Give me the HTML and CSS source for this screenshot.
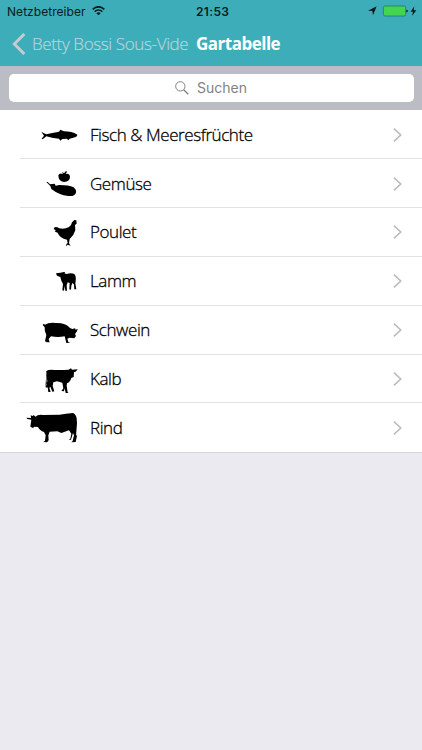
FILE: index.html
```html
<!DOCTYPE html>
<html lang="de">
<head>
<meta charset="utf-8">
<title>Gartabelle</title>
<link rel="stylesheet" href="styles.css">
</head>
<body>
<header class="top">
  <div class="status">
    <span class="carrier">Netzbetreiber</span>
    <svg class="wifi" viewBox="0 0 39 30"><g fill="none" stroke="#051c1f" stroke-width="5"><path d="M2 10Q19.500-5 37 10"/><path d="M8 17Q19.500 7 31 17"/></g><path d="M13 22Q19.500 16 26 22L19.500 28Z" fill="#051c1f"/></svg>
    <span class="clock">21:53</span>
    <svg class="power" viewBox="0 0 150 42"><path d="M0 20L26 7 15 34 13 21Z" fill="#051c1f"/><rect x="46" y="6" width="67" height="30" rx="5" fill="#43d551" stroke="#176b67" stroke-width="2"/><path d="M115 17q5 1 5 4t-5 4z" fill="#051c1f"/><path d="M139 7l-11 16h7l-3 13 13-17h-8z" fill="#051c1f"/></svg>
  </div>
  <nav class="nav">
    <svg class="back" viewBox="0 0 42 66"><path d="M37 3L7 33 37 63" fill="none" stroke="#c5cbd0" stroke-width="9"/></svg>
    <span class="parent">Betty Bossi Sous-Vide</span>
    <span class="title">Gartabelle</span>
  </nav>
</header>
<div class="search">
  <div class="field">
    <svg class="glass" viewBox="0 0 42 42"><g fill="none" stroke="#818286" stroke-width="3"><circle cx="16" cy="16" r="14"/><path d="M26 26L40 40" stroke-width="4"/></g></svg>
    <span>Suchen</span>
  </div>
</div>
<main class="list">
  <div class="row"><svg class="animal" viewBox="0 -5 210 146"><path d="M64 60L72 65 79 68Q96 63 117 60L121 54 132 59Q155 59 172 69 173 74 165 77L149 81 145 86 141 81 127 82 121 87 117 81Q94 80 79 74L68 83 65 81 72 72Z"/></svg><span class="label">Fisch &amp; Meeresfrüchte</span><svg class="chev" viewBox="0 0 24 39"><path d="M2 2L21 19.500 2 37"/></svg></div>
  <div class="row"><svg class="animal" viewBox="0 -3 210 146"><path d="M115 46Q119 37 129 42L126 35 132 40 138 33 141 35 137 42Q148 39 150 50 150 65 132 66 115 65 115 46ZM79 66L83 66 90 73 104 71 107 77 118 75Q146 75 161 82 169 88 168 98 164 110 145 108 117 105 94 87L91 78Z"/></svg><span class="label">Gemüse</span><svg class="chev" viewBox="0 0 24 39"><path d="M2 2L21 19.500 2 37"/></svg></div>
  <div class="row"><svg class="animal" viewBox="0 -3 210 146"><path d="M101 60Q102 52 112 55L118 58Q134 61 147 54 155 48 156 40L163 33 169 34 170 44 165 48 166 64Q162 79 149 90L147 103 152 110 143 107 138 112 139 106 143 102 141 92Q119 88 113 71L105 68 107 64Z"/></svg><span class="label">Poulet</span><svg class="chev" viewBox="0 0 24 39"><path d="M2 2L21 19.500 2 37"/></svg></div>
  <div class="row"><svg class="animal" viewBox="0 -3 210 146"><path d="M108 46L121 44 132 42 136 43 133 46 140 48Q153 44 163 48 169 54 167 69L166 76 169 94 163 94 162 80 158 74 154 83 153 95 148 94 149 75 143 73 140 82 141 98 136 98 134 84 132 98 127 97 129 78Q123 68 121 57L111 53Z"/></svg><span class="label">Lamm</span><svg class="chev" viewBox="0 0 24 39"><path d="M2 2L21 19.500 2 37"/></svg></div>
  <div class="row"><svg class="animal" viewBox="0 -1 210 146"><path d="M68 56L71 52 75 55Q85 48 107 50 137 49 150 65L157 68 165 66 167 70 173 67 171 75 165 83 168 89 163 96 149 94 142 97 145 107 151 109 139 110 134 90Q114 94 93 90L86 98 89 108 80 108 77 103 80 107 75 105 79 86Q73 75 74 63Z"/></svg><span class="label">Schwein</span><svg class="chev" viewBox="0 0 24 39"><path d="M2 2L21 19.500 2 37"/></svg></div>
  <div class="row"><svg class="animal" viewBox="0 -1 210 146"><path d="M79 47Q87 41 105 44 124 45 146 43L153 39 156 43 173 42 167 49 162 50 161 65 154 68Q151 80 141 84L140 91 143 111 146 113 137 113 134 99 132 108 124 107 130 99 127 82 111 78 100 81 98 92 103 108 97 109 91 94 88 98 92 110 85 110 83 96 80 98 77 91 82 78 79 56 76 98 80 86Z"/></svg><span class="label">Kalb</span><svg class="chev" viewBox="0 0 24 39"><path d="M2 2L21 19.500 2 37"/></svg></div>
  <div class="row"><svg class="animal" viewBox="0 1 210 146"><path d="M19 45L33 46 32 38 38 40 41 37 46 42Q55 34 68 37L119 36Q137 33 159 31 168 35 170 47L171 62 168 101 172 95 167 118 154 119 158 115 162 98 159 91 153 111 146 112 151 108 154 93 147 83 124 91 112 86 89 87 85 98 86 113 81 119 70 118 75 114 77 98 72 88Q59 84 54 73L43 72 39 76 31 72 34 51 22 49Z"/></svg><span class="label">Rind</span><svg class="chev" viewBox="0 0 24 39"><path d="M2 2L21 19.500 2 37"/></svg></div>
</main>
</body>
</html>
```
FILE: styles.css
```css
* { box-sizing: border-box; }
body { margin: 0; width: 422px; height: 750px; overflow: hidden; background: #eaeaf0; font-family: "Open Sans", sans-serif; color: #000; }
svg { display: block; flex: none; }
.top { height: 66px; background: #3eadba; }
.status { height: 22px; display: grid; grid-template-columns: 85px 111px 1fr 50px; align-items: center; padding: 0 4px 0 7px; font: 12px Inter, sans-serif; color: #051c1f; }
.carrier { letter-spacing: .05px; }
.wifi { width: 13px; height: 10px; justify-self: start; }
.clock { font-weight: 600; letter-spacing: .35px; margin-left: -7px; }
.power { width: 50px; height: 14px; }
.nav { height: 44px; display: flex; align-items: center; padding-left: 12px; font-size: 17px; line-height: 24px; white-space: nowrap; }
.back { width: 14px; height: 22px; margin-right: 6px; }
.parent { width: 164px; color: #b9d3da; font-weight: 300; letter-spacing: -.37px; -webkit-text-stroke: .2px #b9d3da; }
.title { color: #fff; font-weight: 700; letter-spacing: -.5px; }
.search { height: 44.300px; background: #bcbcc5; padding: 7.500px 8.500px; }
.field { height: 28.500px; border-radius: 5px; background: #fff; display: flex; align-items: center; justify-content: center; gap: 8px; font: 14px Inter, sans-serif; color: #818286; }
.glass { width: 14px; height: 14px; }
.list { background: #fff; border-bottom: 1px solid #d5d5da; }
.row { height: 48.850px; display: flex; align-items: center; position: relative; padding: 0 20px 0 20px; }
.row + .row::before { content: ""; position: absolute; top: -1px; left: 20px; right: 0; height: 1px; background: #e2e2e5; }
.animal { width: 70px; height: 48.670px; align-self: flex-start; fill: #000; }
.label { flex: 1; font-size: 17px; line-height: 24px; font-weight: 300; letter-spacing: -.42px; -webkit-text-stroke: .3px #000; }
.chev { width: 9px; height: 14px; fill: none; stroke: #bcbcc1; stroke-width: 4.500px; }
```
